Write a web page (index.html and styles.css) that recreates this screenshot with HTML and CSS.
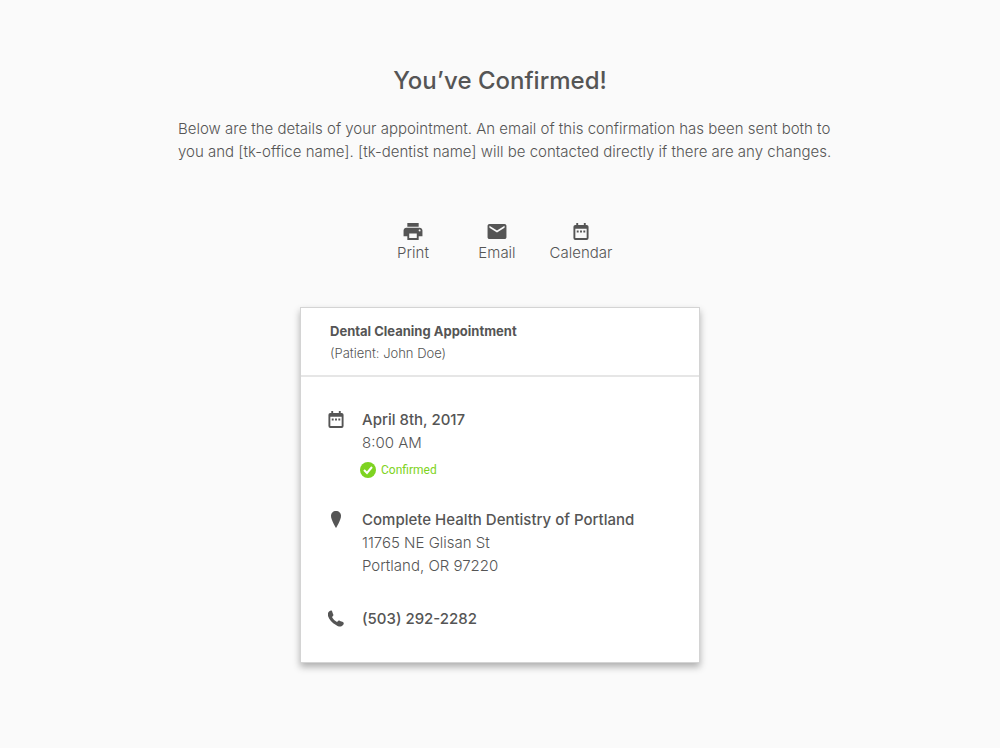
FILE: index.html
```html
<!DOCTYPE html>
<html lang="en">
<head>
    <meta charset="UTF-8">
    <meta name="viewport" content="width=device-width, initial-scale=1.0">
    <title>Appointment Confirmed</title>
    <link rel="stylesheet" href="styles.css">
</head>
<body>
    <!-- Icons -->
    <svg class="icon-defs" aria-hidden="true">
        <symbol id="icon-calendar" viewBox="0 0 16 18">
            <path fill-rule="evenodd" d="M3 0h2v2h6V0h2v2h1a2 2 0 0 1 2 2v12a2 2 0 0 1-2 2H2a2 2 0 0 1-2-2V4a2 2 0 0 1 2-2h1zM2 6v10h12V6zM3.500 8h2v2h-2zM7 8h2v2H7zM10.500 8h2v2h-2z"/>
        </symbol>
    </svg>

    <main class="page">
        <h1>You’ve Confirmed!</h1>
        <p class="intro">Below are the details of your appointment. An email of this confirmation has been sent both to you and [tk-office name]. [tk-dentist name] will be contacted directly if there are any changes.</p>

        <div class="actions">
            <button type="button" class="action">
                <svg width="20" height="17" viewBox="2 3 20 18"><path d="M19 8H5c-1.660 0-3 1.340-3 3v6h4v4h12v-4h4v-6c0-1.660-1.340-3-3-3zm-3 11H8v-5h8v5zm3-7c-.550 0-1-.450-1-1s.450-1 1-1 1 .450 1 1-.450 1-1 1zm-1-9H6v4h12V3z"/></svg>
                Print
            </button>
            <button type="button" class="action">
                <svg width="20" height="17" viewBox="2 3 20 18"><path d="M20 4H4c-1.100 0-2 .900-2 2v12c0 1.100.900 2 2 2h16c1.100 0 2-.900 2-2V6c0-1.100-.900-2-2-2zm0 4l-8 5-8-5V6l8 5 8-5v2z"/></svg>
                Email
            </button>
            <button type="button" class="action">
                <svg width="16" height="17"><use href="#icon-calendar"/></svg>
                Calendar
            </button>
        </div>

        <section class="card">
            <header class="card-header">
                <h2>Dental Cleaning Appointment</h2>
                <p>(Patient: John Doe)</p>
            </header>
            <div class="card-body">
                <div class="detail">
                    <svg class="detail-icon" width="16" height="17"><use href="#icon-calendar"/></svg>
                    <div>
                        <h3>April 8th, 2017</h3>
                        <p>8:00 AM</p>
                        <p class="status">
                            <svg width="16" height="16" viewBox="0 0 16 16"><circle cx="8" cy="8" r="8"/><path class="check" d="M4 8l3 3 5-6"/></svg>
                            Confirmed
                        </p>
                    </div>
                </div>
                <div class="detail">
                    <svg class="detail-icon" width="16" height="18" viewBox="0 0 16 18"><path d="M8 0C5 0 3 2 3 5c0 4 5 12 5 12s5-8 5-12c0-3-2-5-5-5z"/></svg>
                    <address>
                        <h3>Complete Health Dentistry of Portland</h3>
                        <p>11765 NE Glisan St</p>
                        <p>Portland, OR 97220</p>
                    </address>
                </div>
                <div class="detail">
                    <svg class="detail-icon" width="16" height="18" viewBox="0 0 16 18"><path d="M0 3C1 1 3 0 4 1l1 3c1 1 0 2-1 3 1 2 3 4 5 5 1-1 2-2 3-1l3 1c1 1 1 2 0 3-2 2-4 2-7 0C4 13 1 9 0 6c0-1-1-2 0-3z"/></svg>
                    <h3>(503) 292-2282</h3>
                </div>
            </div>
        </section>
    </main>
</body>
</html>
```
FILE: styles.css
```css
* {
    box-sizing: border-box;
}
body {
    margin: 0;
    background: #fafafa;
    color: #555;
    font-family: Inter, Lato, sans-serif;
    font-size: 15px;
    font-weight: 300;
    line-height: 23px;
}
h1, h2, h3, p {
    margin: 0;
}
svg {
    fill: #555;
}
.icon-defs {
    position: absolute;
    width: 0;
    height: 0;
}
.page {
    display: flex;
    flex-direction: column;
    align-items: center;
    padding: 64px 20px;
}
h1 {
    font-size: 24px;
    font-weight: 500;
    line-height: 34px;
}
.intro {
    max-width: 656px;
    margin: 19px 0 0 12px;
}

.actions {
    display: grid;
    grid-template-columns: repeat(3, 84px);
    margin: 60px 6px 0 0;
}
.action {
    display: flex;
    flex-direction: column;
    align-items: center;
    gap: 1px;
    padding: 0;
    border: 0;
    background: none;
    color: inherit;
    font: inherit;
    cursor: pointer;
}

.card {
    width: 100%;
    max-width: 400px;
    margin-top: 43px;
    background: #fff;
    border: 1px solid #d4d4d4;
    box-shadow: 0 4px 7px rgba(0, 0, 0, 0.3);
}
.card-header {
    padding: 12px 29px 11px;
    border-bottom: 2px solid #e6e6e6;
    font-size: 13px;
    line-height: 22px;
}
.card-header h2 {
    font-size: 13px;
    font-weight: 700;
}
.card-body {
    display: flex;
    flex-direction: column;
    gap: 31px;
    padding: 32px 27px;
}
.detail {
    display: flex;
    gap: 18px;
}
.detail-icon {
    flex: none;
    margin-top: 2px;
}
.detail h3 {
    font-size: 15px;
    font-weight: 500;
    line-height: 22px;
}
address {
    font-style: normal;
}
.status {
    display: flex;
    align-items: center;
    gap: 5px;
    margin: 8px 0 0 -2px;
    color: #7ed321;
    font-family: Roboto, sans-serif;
    font-size: 12px;
    font-weight: 400;
    line-height: 16px;
}
.status svg {
    fill: #7ed321;
}
.status .check {
    fill: none;
    stroke: #fff;
    stroke-width: 2;
}
```
